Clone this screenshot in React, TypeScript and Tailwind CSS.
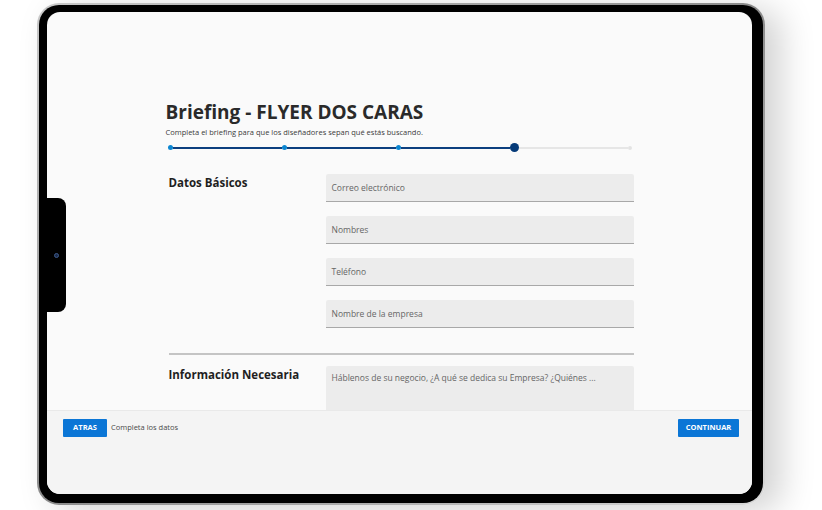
import React from 'react';

const fields = ['Correo electrónico', 'Nombres', 'Teléfono', 'Nombre de la empresa'];

function Progress() {
  return (
    <div className="mt-[6px] flex items-center px-[2px]">
      <span className="h-[5px] w-[5px] rounded-full bg-[#0b86d1]" />
      <span className="h-[2px] flex-1 bg-[#0c3f7f]" />
      <span className="h-[5px] w-[5px] rounded-full bg-[#0b86d1]" />
      <span className="h-[2px] flex-1 bg-[#0c3f7f]" />
      <span className="h-[5px] w-[5px] rounded-full bg-[#0b86d1]" />
      <span className="h-[2px] flex-1 bg-[#0c3f7f]" />
      <span className="h-[9px] w-[9px] rounded-full bg-[#053a78]" />
      <span className="h-[2px] flex-1 bg-[#e6e6e6]" />
      <span className="h-[4px] w-[4px] rounded-full bg-[#e3e3e3]" />
    </div>
  );
}

export default function App() {
  return (
    <div className="h-[510px] w-[822px] overflow-hidden bg-white pl-[37px] pt-[3px] font-['Open_Sans',sans-serif]">
      {/* marco de la tablet */}
      <div className="h-[502px] w-[728px] rounded-[22px] bg-gradient-to-br from-[#c9c9c9] via-[#8a8a8a] to-[#d8d8d8] p-[2px] shadow-[16px_6px_34px_rgba(0,0,0,0.18)]">
        <div className="h-full w-full rounded-[20px] bg-black pb-[9px] pl-[8px] pr-[11px] pt-[7px]">
          <div className="relative flex h-full w-full flex-col overflow-hidden rounded-[13px] bg-[#fafafa]">
            {/* notch */}
            <div className="absolute left-0 top-[186px] flex h-[114px] w-[19px] items-center justify-center rounded-r-[8px] bg-black">
              <span className="h-[5px] w-[5px] rounded-full border border-[#3d5a8a] bg-[#1b2a4a]" />
            </div>

            <div className="flex-1 overflow-hidden">
              <div className="mx-auto w-[468px] pt-[88px]">
                <h1 className="text-[19px] font-bold leading-[24px] text-[#2a2a2a]">Briefing - FLYER DOS CARAS</h1>
                <p className="mt-[3px] text-[7.5px] leading-[10px] text-[#3a3a3a]">
                  Completa el briefing para que los diseñadores sepan qué estás buscando.
                </p>
                <Progress />

                <div className="mt-[22px] grid grid-cols-[160px_1fr]">
                  <h2 className="pl-[3px] text-[11.5px] font-bold text-[#1f1f1f]">Datos Básicos</h2>
                  <div className="flex flex-col gap-[14px]">
                    {fields.map((f) => (
                      <div
                        key={f}
                        className="flex h-[28px] items-center rounded-t-[2px] border-b-[1.5px] border-[#a8a8a8] bg-[#ececec] px-[6px] pt-[2px] text-[8.5px] text-[#666]"
                      >
                        {f}
                      </div>
                    ))}
                  </div>
                </div>

                <div className="ml-[3px] mt-[25px] h-[1.5px] bg-[#c4c4c4]" />

                <div className="mt-[11px] grid grid-cols-[160px_1fr]">
                  <h2 className="pl-[3px] text-[11.5px] font-bold text-[#1f1f1f]">Información Necesaria</h2>
                  <div className="h-[70px] rounded-t-[2px] bg-[#ececec] px-[6px] pt-[6px] text-[8.5px] text-[#666]">
                    Háblenos de su negocio, ¿A qué se dedica su Empresa? ¿Quiénes ...
                  </div>
                </div>
              </div>
            </div>

            {/* pie */}
            <div className="flex h-[84px] shrink-0 items-start justify-between border-t border-[#e9e9e9] bg-[#f4f4f4] pl-[16px] pr-[13px] pt-[8px]">
              <div className="flex items-center gap-[4px]">
                <button className="h-[18px] w-[44px] rounded-[1px] bg-[#0b76d6] text-[7.5px] font-bold text-white">ATRAS</button>
                <span className="text-[7.5px] text-[#4a4a4a]">Completa los datos</span>
              </div>
              <button className="h-[18px] w-[61px] rounded-[1px] bg-[#0b76d6] text-[7.5px] font-bold text-white">CONTINUAR</button>
            </div>
          </div>
        </div>
      </div>
    </div>
  );
}
